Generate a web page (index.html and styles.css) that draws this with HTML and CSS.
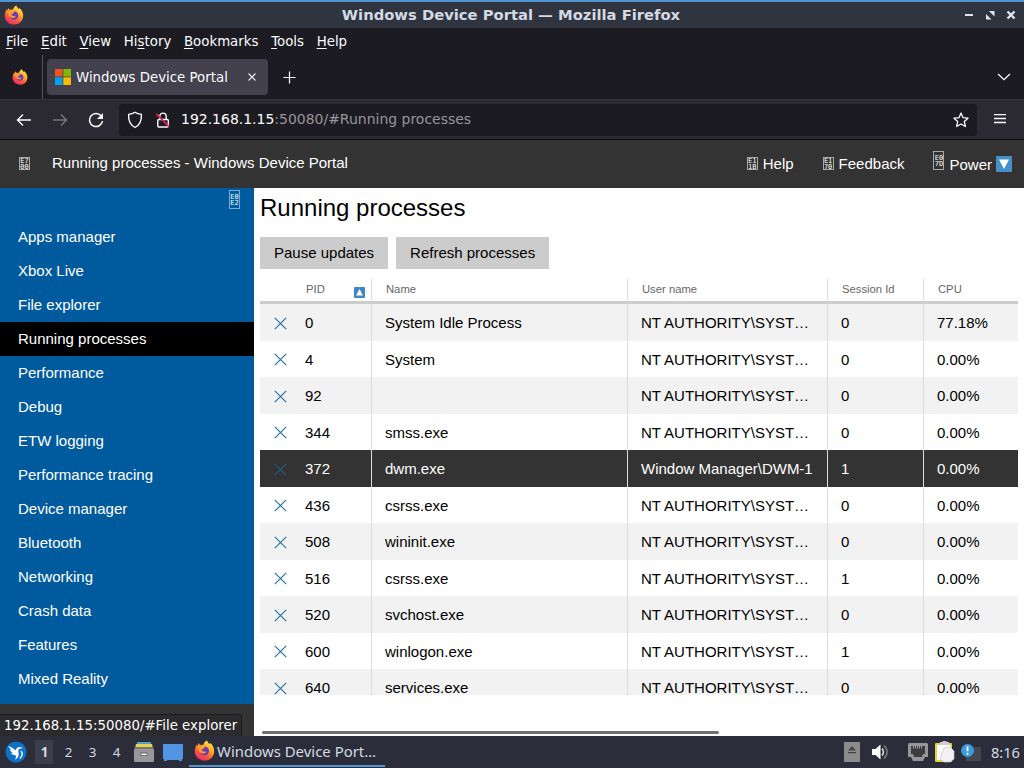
FILE: index.html
```html
<!DOCTYPE html>
<html lang="en">
<head>
    <meta charset="UTF-8">
    <meta name="viewport" content="width=device-width, initial-scale=1.0">
    <title>Windows Device Portal</title>
    <link rel="stylesheet" href="styles.css">
</head>
<body>
    <svg class="defs" width="0" height="0">
        <defs>
            <linearGradient id="flame" x1="0.8" y1="0" x2="0.2" y2="1">
                <stop offset="0" stop-color="#fff04a"/>
                <stop offset="0.35" stop-color="#ffae2a"/>
                <stop offset="0.65" stop-color="#ff5a36"/>
                <stop offset="1" stop-color="#e8207c"/>
            </linearGradient>
            <symbol id="firefox" viewBox="0 0 20 20">
                <path fill="url(#flame)" d="M12.2 0.4c1 1.300 1.300 2.300 2.600 3.500l.7-1c2.500 2.200 3.900 5 3.700 8.200-.3 5-4.300 8.500-9.200 8.500-5.200 0-9.300-3.900-9.300-8.900 0-2.700.8-4.800 2.200-6.700l.4 1.600 1.300-2.700 1.200 2c1-.4 2-.4 3 0 .6-2.200 1.600-3.600 3.400-4.500z"/>
                <path fill="#6f3bb5" d="M10.200 6.300c2.700.2 4.200 2 4.100 4.400-.1 2.400-1.900 4-4.300 4-2.600 0-4.400-1.700-4.400-4.100 0-1 .3-1.700.7-2.200.8.300 1.700.200 2.500.3z"/>
                <path fill="#ff9a2d" d="M2.800 6.200c1.400-.6 3-.4 4.300.5l2.800.3c0 1-1.200 1.400-2.200 1.700-.4 1.200.2 2 1.300 2.300 1 .3 1.700-.2 2.700.1-.6 1.600-2.400 2.200-4 1.700C5 12 3.300 9.500 2.800 6.200z"/>
            </symbol>
            <symbol id="close" viewBox="0 0 13 13">
                <path d="M.8.8l11.400 11.400m0-11.400L.8 12.200" stroke="#1d6fa5" stroke-width="1.100"/>
            </symbol>
        </defs>
    </svg>

    <div class="titlebar">
        <svg class="title-logo" width="20" height="20"><use href="#firefox"/></svg>
        <span class="title-text">Windows Device Portal — Mozilla Firefox</span>
        <svg class="window-controls" width="54" height="12" viewBox="0 0 54 12">
            <path d="M2 6h8" stroke="#e4e6ec" stroke-width="2"/>
            <path d="M26 2h5.500v5.500zM23 5v5.500h5.500z" fill="#e4e6ec"/>
            <path d="M44.500 2.500l7 7m0-7l-7 7" stroke="#e4e6ec" stroke-width="2.400"/>
        </svg>
    </div>

    <div class="menubar">
        <span><u>F</u>ile</span>
        <span><u>E</u>dit</span>
        <span><u>V</u>iew</span>
        <span>Hi<u>s</u>tory</span>
        <span><u>B</u>ookmarks</span>
        <span><u>T</u>ools</span>
        <span><u>H</u>elp</span>
    </div>

    <div class="tabs">
        <div class="pinned-tab">
            <svg width="16" height="16"><use href="#firefox"/></svg>
        </div>
        <div class="tab">
            <svg width="16" height="16" viewBox="0 0 16 16">
                <path fill="#f25022" d="M0 0h7.500v7.500H0z"/>
                <path fill="#7fba00" d="M8.300 0H16v7.500H8.300z"/>
                <path fill="#00a4ef" d="M0 8.300h7.500V16H0z"/>
                <path fill="#ffb900" d="M8.300 8.300H16V16H8.300z"/>
            </svg>
            <span class="tab-label">Windows Device Portal</span>
            <svg width="8" height="8" viewBox="0 0 8 8"><path d="M.5.5l7 7m0-7l-7 7" stroke="#e8e8ee" stroke-width="1.100"/></svg>
        </div>
        <svg class="new-tab" width="12" height="12" viewBox="0 0 12 12"><path d="M6.500 .5v12M.5 6.500h12" stroke="#fbfbfe" stroke-width="1.200"/></svg>
        <svg class="all-tabs" width="14" height="8" viewBox="0 0 14 8"><path d="M1 1l6 5.700L13 1" fill="none" stroke="#fbfbfe" stroke-width="1.300"/></svg>
    </div>

    <div class="toolbar">
        <svg class="nav-icon" width="16" height="16" viewBox="0 0 16 16"><path d="M15 8H1.500M7 2.500L1.500 8 7 13.500" fill="none" stroke="#fbfbfe" stroke-width="1.400"/></svg>
        <svg class="nav-icon" width="16" height="16" viewBox="0 0 16 16"><path d="M1 8h13.500M9 2.500L14.500 8 9 13.500" fill="none" stroke="#77767e" stroke-width="1.400"/></svg>
        <svg class="nav-icon" width="16" height="16" viewBox="0 0 16 16">
            <path d="M13.500 4.500A6.500 6.500 0 1 0 14.500 9" fill="none" stroke="#fbfbfe" stroke-width="1.500"/>
            <path d="M15 1v6H9z" fill="#fbfbfe"/>
        </svg>
        <div class="urlbar">
            <svg width="16" height="18" viewBox="0 0 16 18"><path d="M8 1.200c1.800 1.300 4 1.900 6.400 2.200.3 5.700-1.500 10.600-6.400 13.100C3.100 14 1.300 9.100 1.600 3.400 4 3.100 6.200 2.500 8 1.200z" fill="none" stroke="#fbfbfe" stroke-width="1.400" stroke-linejoin="round"/></svg>
            <svg class="lock" width="16" height="16" viewBox="0 0 16 16">
                <rect x="2.800" y="7.500" width="10.500" height="7.500" rx="1" fill="none" stroke="#fbfbfe" stroke-width="1.400"/>
                <path d="M4.800 7.500V4.300a3.200 3.200 0 0 1 6.400 0v3.200" fill="none" stroke="#fbfbfe" stroke-width="1.400"/>
                <path d="M1.300 1.800l13 13" stroke="#e22850" stroke-width="1.700"/>
            </svg>
            <span class="url"><b>192.168.1.15</b>:50080/#Running processes</span>
            <svg class="star" width="16" height="16" viewBox="0 0 16 16"><path d="M8 1.100l2 4.600 5 .5-3.700 3.400 1.100 4.900L8 12l-4.400 2.500 1.100-4.900L1 6.200l5-.5z" fill="none" stroke="#fbfbfe" stroke-width="1.300" stroke-linejoin="round"/></svg>
        </div>
        <svg class="hamburger" width="12" height="11" viewBox="0 0 12 11"><path d="M0 .5h12M0 4.500h12M0 8.500h12" stroke="#fbfbfe" stroke-width="1.300"/></svg>
    </div>

    <div class="page">
        <header class="header">
            <span class="glyph small">E7<br>00</span>
            <span class="page-name">Running processes - Windows Device Portal</span>
            <div class="header-link help"><span class="glyph small">E1<br>1B</span>Help</div>
            <div class="header-link feedback"><span class="glyph small">E1<br>70</span>Feedback</div>
            <div class="header-link power">
                <span class="glyph tall">E0<br>7D</span>Power
                <svg width="16" height="16" viewBox="0 0 16 16"><rect width="16" height="16" rx="1" fill="#4590c7"/><path d="M3 3.500h10L8 13z" fill="#fff"/></svg>
            </div>
        </header>
        <div class="content">
            <nav class="sidebar">
                <div class="collapse"><span class="glyph tall">E0<br>E2</span></div>
                <ul class="menu">
                    <li>Apps manager</li>
                    <li>Xbox Live</li>
                    <li>File explorer</li>
                    <li class="active">Running processes</li>
                    <li>Performance</li>
                    <li>Debug</li>
                    <li>ETW logging</li>
                    <li>Performance tracing</li>
                    <li>Device manager</li>
                    <li>Bluetooth</li>
                    <li>Networking</li>
                    <li>Crash data</li>
                    <li>Features</li>
                    <li>Mixed Reality</li>
                </ul>
                <div class="sidebar-footer"><div class="status">192.168.1.15:50080/#File explorer</div></div>
            </nav>
            <main class="main">
                <h1>Running processes</h1>
                <div class="actions">
                    <button>Pause updates</button>
                    <button>Refresh processes</button>
                </div>
                <div class="table">
                    <div class="row head">
                        <span></span>
                        <span class="sorted">PID <svg width="11" height="11" viewBox="0 0 11 11"><rect width="11" height="11" rx="1" fill="#3c88c4"/><path d="M2 8.500h7L5.500 2z" fill="#fff"/></svg></span>
                        <span>Name</span><span>User name</span><span>Session Id</span><span>CPU</span>
                    </div>
                    <div class="rows">
                        <div class="row"><svg class="kill"><use href="#close"/></svg><span>0</span><span>System Idle Process</span><span>NT AUTHORITY\SYSTEM</span><span>0</span><span>77.18%</span></div>
                        <div class="row"><svg class="kill"><use href="#close"/></svg><span>4</span><span>System</span><span>NT AUTHORITY\SYSTEM</span><span>0</span><span>0.00%</span></div>
                        <div class="row"><svg class="kill"><use href="#close"/></svg><span>92</span><span></span><span>NT AUTHORITY\SYSTEM</span><span>0</span><span>0.00%</span></div>
                        <div class="row"><svg class="kill"><use href="#close"/></svg><span>344</span><span>smss.exe</span><span>NT AUTHORITY\SYSTEM</span><span>0</span><span>0.00%</span></div>
                        <div class="row selected"><svg class="kill"><use href="#close"/></svg><span>372</span><span>dwm.exe</span><span>Window Manager\DWM-1</span><span>1</span><span>0.00%</span></div>
                        <div class="row"><svg class="kill"><use href="#close"/></svg><span>436</span><span>csrss.exe</span><span>NT AUTHORITY\SYSTEM</span><span>0</span><span>0.00%</span></div>
                        <div class="row"><svg class="kill"><use href="#close"/></svg><span>508</span><span>wininit.exe</span><span>NT AUTHORITY\SYSTEM</span><span>0</span><span>0.00%</span></div>
                        <div class="row"><svg class="kill"><use href="#close"/></svg><span>516</span><span>csrss.exe</span><span>NT AUTHORITY\SYSTEM</span><span>1</span><span>0.00%</span></div>
                        <div class="row"><svg class="kill"><use href="#close"/></svg><span>520</span><span>svchost.exe</span><span>NT AUTHORITY\SYSTEM</span><span>0</span><span>0.00%</span></div>
                        <div class="row"><svg class="kill"><use href="#close"/></svg><span>600</span><span>winlogon.exe</span><span>NT AUTHORITY\SYSTEM</span><span>1</span><span>0.00%</span></div>
                        <div class="row"><svg class="kill"><use href="#close"/></svg><span>640</span><span>services.exe</span><span>NT AUTHORITY\SYSTEM</span><span>0</span><span>0.00%</span></div>
                    </div>
                </div>
                <div class="scrollbar"></div>
            </main>
        </div>
    </div>

    <footer class="taskbar">
        <svg class="start" width="22" height="22" viewBox="0 0 22 22">
            <circle cx="11" cy="11" r="10.500" fill="#0f70c8"/>
            <path fill="#fff" d="M3 5c3 1 5.500 2 7.500 4.500C11 7.500 12.500 6 15 6l3 1-2.500.6c-2 .6-2.600 2-2 4 .8 3-.7 6-3.700 7.400 1.200-1.800 1.500-3.200.8-4.800-2 .2-3.800-.6-5-2.400l2.800.2C6.600 11.200 5.200 9.800 4.700 8.200l2.600.8C5.500 8 4 6.700 3 5z"/>
            <path d="M16 10c2 2.500 1.300 5.500-1.300 7.500" fill="none" stroke="#fff" stroke-width="1.300"/>
        </svg>
        <div class="desktops"><span class="current">1</span><span>2</span><span>3</span><span>4</span></div>
        <svg class="files" width="20" height="20" viewBox="0 0 20 20">
            <path fill="#4da3c4" d="M3 0h14v3H3z"/>
            <path fill="#ecd04e" d="M2 2h16l1 4H1z"/>
            <path fill="#77777a" d="M1 5h18l1 3H0z"/>
            <rect y="7" width="20" height="13" rx="1" fill="#98989b"/>
            <rect x="6" y="10" width="8" height="4" rx="1.500" fill="#77777a"/>
            <path fill="#fff" d="M7.500 11.500h5v1.500h-5z"/>
        </svg>
        <svg class="desktop" width="20" height="17" viewBox="0 0 20 17"><path fill="#5294e2" d="M0 0h20v15h-1v2h-3v-1H4v1H1v-2H0z"/></svg>
        <div class="task">
            <svg width="21" height="21"><use href="#firefox"/></svg>
            <span>Windows Device Port…</span>
        </div>
        <div class="tray">
            <svg width="16" height="20" viewBox="0 0 16 20"><path fill="#8c8c8c" d="M0 0h16v20H0z"/><path fill="#444" d="M8 4l4 4.500H4zM4 10h8v1.200H4z"/></svg>
            <svg class="volume" width="18" height="16" viewBox="0 0 18 16">
                <path fill="#fff" d="M0 5h3.500L8.500.5v15L3.500 11H0z"/>
                <path d="M10 4.500c1.800 2 1.800 5 0 7" fill="none" stroke="#ddd" stroke-width="1.700"/>
                <path d="M12 1.500c4 3.500 4 9.500 0 13" fill="none" stroke="#70737c" stroke-width="1.700"/>
            </svg>
            <svg class="network" width="20" height="18" viewBox="0 0 20 18"><path fill="#96969a" d="M1 0h18l1 1v13h-3l-2 4H5l-2-4H0V1z"/><path fill="#3c3c3e" d="M3 3h14v8h-2l-1 3H6l-1-3H3z"/><path d="M5.500 3v2.500M7.500 3v2.500M9.500 3v2.500M11.500 3v2.500M13.500 3v2.500" stroke="#bbb" stroke-width=".8"/></svg>
            <svg class="clipboard" width="20" height="22" viewBox="0 0 20 22"><rect y="2" width="17" height="19" rx="1" fill="#ded83d"/><path fill="#fff" d="M2 4h13v15H2z"/><path fill="#d3c8dd" d="M5 1h2l1-1h3l1 1h2v3H5z"/><path fill="#f4f1f6" stroke="#c9c4ce" stroke-width=".7" d="M9 7l6-1 4 4v8l-4 3H9L5 18z"/></svg>
            <svg class="notice" width="20" height="17" viewBox="0 0 20 17"><path fill="#44474f" d="M5 3h15v14H5z"/><circle cx="6.500" cy="6.500" r="6.500" fill="#3d9bdd"/><path d="M6.500 2.200v5M6.500 8.700v2" stroke="#fff" stroke-width="1.800"/></svg>
            <span class="clock">8:16</span>
        </div>
    </footer>
</body>
</html>
```
FILE: styles.css
```css
* {
    box-sizing: border-box;
}
body {
    margin: 0;
    width: 1024px;
    height: 768px;
    overflow: hidden;
    display: flex;
    flex-direction: column;
    font-family: "DejaVu Sans", sans-serif;
    font-size: 13.33px;
    color: #fbfbfe;
    background-color: #1c1b22;
}
svg {
    display: block;
    flex: none;
}
.defs {
    position: absolute;
}

/* window frame */
.titlebar {
    height: 28px;
    flex: none;
    display: flex;
    align-items: center;
    border-top: 2px solid #5294cf;
    padding: 0 8px 0 4px;
    background-color: #2f343f;
}
.title-text {
    flex: 1;
    text-align: center;
    font-weight: bold;
    color: #d3dae3;
    font-size: 14.75px;
    padding: 0 0 2px 35px;
}
.window-controls {
    margin-right: -1px;
}
.menubar {
    height: 27px;
    flex: none;
    display: flex;
    align-items: center;
    gap: 12.7px;
    padding-left: 6px;
}
.menubar u {
    text-underline-offset: 2px;
}
.tabs {
    height: 44px;
    flex: none;
    display: flex;
    align-items: center;
}
.pinned-tab {
    width: 43px;
    height: 44px;
    padding: 14px 0 0 12px;
    border-right: 1px solid #54535a;
}
.tab {
    width: 221px;
    height: 36px;
    margin-left: 4px;
    padding: 0 12px 0 8px;
    display: flex;
    align-items: center;
    border-radius: 4px;
    background-color: #42414d;
}
.tab-label {
    flex: 1;
    padding-left: 5px;
}
.new-tab {
    margin-left: 15px;
    overflow: visible;
}
.all-tabs {
    margin: 0 13px 0 auto;
}
.toolbar {
    height: 41px;
    flex: none;
    display: flex;
    align-items: center;
    padding: 0 18px 0 16px;
    background-color: #2b2a33;
    border-top: 1px solid #36353d;
    border-bottom: 1px solid #0c0c0d;
}
.nav-icon {
    margin-right: 20px;
}
.urlbar {
    width: 858px;
    height: 32px;
    margin-left: -5px;
    padding: 0 8px;
    display: flex;
    align-items: center;
    border-radius: 4px;
    background-color: #1c1b22;
}
.lock {
    margin-left: 12px;
}
.url {
    flex: 1;
    padding: 0 0 2px 10px;
    font-size: 13.97px;
    color: #96959c;
}
.url b {
    font-weight: normal;
    color: #fbfbfe;
}
.hamburger {
    margin-left: auto;
}

/* portal page */
.page {
    height: 596px;
    flex: none;
    background-color: #fff;
    color: #000;
    font-family: "Liberation Sans", Arial, sans-serif;
    font-size: 15px;
}
.header {
    height: 48px;
    display: flex;
    align-items: center;
    padding: 0 12px 2px 19px;
    background-color: #333;
    color: #fff;
}
.glyph {
    display: flex;
    justify-content: center;
    flex: none;
    width: 11px;
    border: 1px solid #a8a8a8;
    color: #fff;
    font: 7px/6px "DejaVu Sans Mono", monospace;
}
.glyph.small {
    height: 13px;
}
.glyph.tall {
    height: 19px;
    padding-top: 3px;
}
.page-name {
    margin-left: 22px;
    padding-bottom: 2px;
}
.header-link {
    display: flex;
    align-items: center;
}
.header-link .glyph {
    margin-right: 5px;
}
.help {
    margin-left: auto;
}
.feedback {
    margin-left: 29px;
}
.power {
    margin-left: 29px;
    padding-top: 2px;
}
.power .glyph.tall {
    margin: -8px 5px 0 0;
}
.power svg {
    margin-left: 4px;
}
.content {
    height: 548px;
    display: flex;
}
.sidebar {
    width: 254px;
    background-color: #005a9e;
    color: #fff;
}
.collapse {
    height: 32px;
    padding: 2px 14px 0 0;
    display: flex;
    justify-content: flex-end;
}
.collapse .glyph {
    border-color: #7ba9cf;
}
.menu {
    height: 484px;
    list-style: none;
    margin: 0;
    padding: 0;
}
.menu li {
    height: 34px;
    line-height: 34px;
    padding-left: 18px;
}
.menu .active {
    background-color: #000;
}
.sidebar-footer {
    height: 32px;
    padding-top: 10px;
    background-color: #333;
}
.status {
    width: 242px;
    height: 22px;
    line-height: 21px;
    padding-left: 4px;
    border: 1px solid #1c1b22;
    border-width: 1px 1px 0 0;
    border-radius: 0 3px 0 0;
    background-color: #2b2a2d;
    font-family: "DejaVu Sans", sans-serif;
    font-size: 13.33px;
    white-space: nowrap;
}
.main {
    flex: 1;
    padding-left: 6px;
    display: flex;
    flex-direction: column;
}
h1 {
    margin: 0;
    height: 49px;
    line-height: 40px;
    font-size: 24px;
    font-weight: normal;
}
.actions {
    display: flex;
    gap: 8px;
}
button {
    height: 32px;
    padding: 0 14px 2px;
    border: 0;
    background-color: #ccc;
    font: 15px "Liberation Sans", Arial, sans-serif;
}
.table {
    width: 758px;
    margin-top: 10px;
}
.row {
    display: grid;
    grid-template-columns: 32px 80px 256px 200px 96px 94px;
    height: 36.500px;
    line-height: 37px;
}
.row span {
    padding: 0 13px;
    overflow: hidden;
    white-space: nowrap;
    text-overflow: ellipsis;
    border-right: 1px solid #ddd;
}
.row span:last-child {
    border-right: 0;
}
.head {
    height: 25px;
    line-height: 21px;
    padding-bottom: 1px;
    font-size: 11.250px;
    color: #666;
    border-bottom: 3px solid #ccc;
}
.head span {
    padding-left: 14px;
}
.head span:first-child {
    border: 0;
}
.head .sorted {
    display: flex;
    justify-content: space-between;
    padding-right: 6px;
}
.sorted svg {
    margin-top: 8px;
}
.rows {
    height: 391px;
    overflow: hidden;
}
.rows .row:nth-child(odd) {
    background-color: #f2f2f2;
}
.rows .row.selected {
    background-color: #333;
    color: #fff;
}
.kill {
    width: 13px;
    height: 13px;
    margin: 12.5px 0 0 14px;
}
.selected .kill {
    opacity: 0.7;
}
.scrollbar {
    width: 457px;
    height: 3px;
    margin: auto 0 2px 2px;
    border-radius: 2px;
    background-color: #707070;
}

/* desktop panel */
.taskbar {
    height: 32px;
    flex: none;
    display: flex;
    align-items: center;
    padding: 0 4px 0 5px;
    background-color: #2b2e3a;
    color: #d3dae3;
    font-family: "Noto Sans", sans-serif;
    font-size: 14.67px;
}
.desktops {
    display: flex;
    margin-left: 8px;
    font-size: 13.33px;
}
.desktops span {
    width: 18px;
    height: 24px;
    line-height: 25px;
    margin-right: 6px;
    padding-left: 1px;
    text-align: center;
}
.desktops .current {
    font-weight: bold;
    background-color: #3a3e4a;
}
.files {
    margin-left: 3px;
}
.desktop {
    margin-left: 9px;
}
.task {
    width: 196px;
    height: 30px;
    margin: 0 0 1px 6px;
    padding-left: 5px;
    display: flex;
    align-items: center;
    gap: 2px;
    border-bottom: 2px solid #5294cf;
    font-size: 14.95px;
    white-space: nowrap;
}
.tray {
    margin-left: auto;
    display: flex;
    align-items: center;
}
.volume {
    margin-left: 12px;
}
.network {
    margin-left: 18px;
}
.clipboard {
    margin-left: 7px;
}
.notice {
    margin-left: 6px;
}
.clock {
    margin-left: 10px;
}
```
